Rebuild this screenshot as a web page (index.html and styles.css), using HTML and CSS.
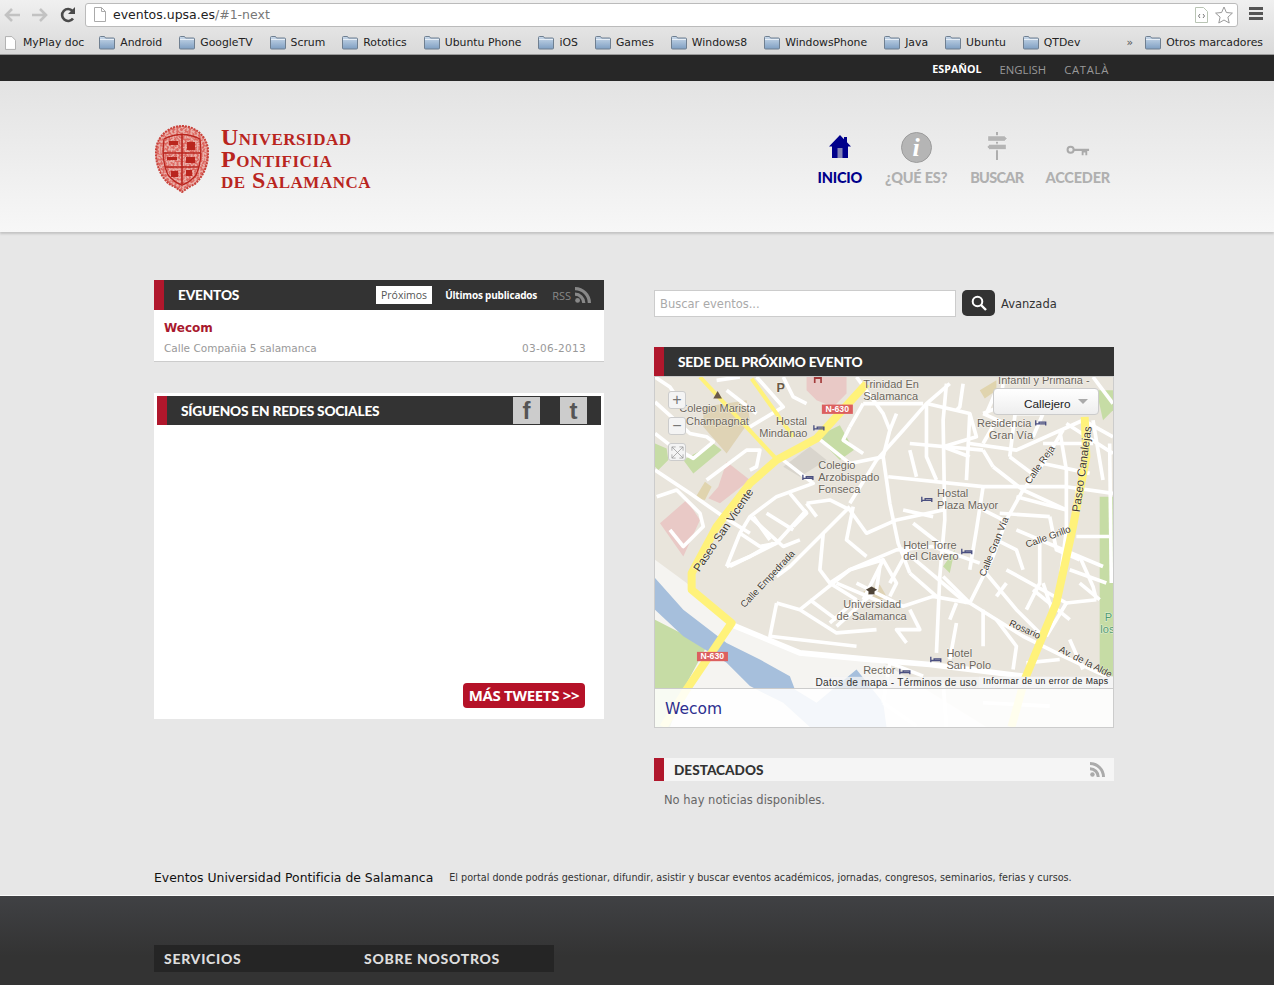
FILE: index.html
```html
<!DOCTYPE html>
<html lang="es">
<head>
<meta charset="UTF-8" />
<title>Eventos UPSA</title>
<link rel="stylesheet" href="styles.css">
</head>
<body>

<svg class="defs" width="0" height="0">
  <defs>
    <linearGradient id="folderfill" x1="0" y1="0" x2="0" y2="1">
      <stop offset="0" stop-color="#c9d9ea"/>
      <stop offset="1" stop-color="#7f9fc2"/>
    </linearGradient>
    <filter id="mottle" x="0" y="0" width="100%" height="100%">
      <feTurbulence type="fractalNoise" baseFrequency=".5" numOctaves="2" seed="4"/>
      <feColorMatrix values="0 0 0 0 .72  0 0 0 0 .14  0 0 0 0 .12  0 0 0 9 -4"/>
      <feComposite in2="SourceGraphic" operator="in"/>
    </filter>
    <symbol id="folder" viewBox="0 0 16 14">
      <path d="M.5 3V1.500q0-1 1-1h4l1 1.500h8q1 0 1 1v9q0 1-1 1h-13q-1 0-1-1z" fill="url(#folderfill)" stroke="#6f7f90"/>
      <path d="M1 3.500h14" stroke="#e6eef6"/>
    </symbol>
    <symbol id="rss" viewBox="0 0 16 16">
      <circle cx="2.600" cy="13.400" r="2.400"/>
      <path d="M0 5.600v3.200a7.200 7.200 0 0 1 7.200 7.200h3.200A10.400 10.400 0 0 0 0 5.600z"/>
      <path d="M0 0v3.200A12.800 12.800 0 0 1 12.800 16H16A16 16 0 0 0 0 0z"/>
    </symbol>
  </defs>
</svg>

<!-- browser chrome -->
<div class="browser">
  <div class="toolbar">
    <svg class="tool" viewBox="0 0 18 16"><path d="M9 2 3 8l6 6M3 8h14" fill="none" stroke="#c2c2c2" stroke-width="2.600"/></svg>
    <svg class="tool" viewBox="0 0 18 16"><path d="M9 2l6 6-6 6M15 8H1" fill="none" stroke="#c2c2c2" stroke-width="2.600"/></svg>
    <svg class="tool" viewBox="0 0 18 16"><path d="M14 11.500A6 6 0 1 1 13.600 4" fill="none" stroke="#4a4a4a" stroke-width="2.600"/><path d="M16 0v7H9z" fill="#4a4a4a"/></svg>
    <div class="address">
      <svg class="page-icon" viewBox="0 0 12 15"><path d="M.5.5h7l4 4v10H.5z" fill="#fff" stroke="#aaa"/><path d="M7.500.5v4h4" fill="none" stroke="#aaa"/></svg>
      <span class="url">eventos.upsa.es<span class="url-rest">/#1-next</span></span>
      <svg class="code-icon" viewBox="0 0 13 16"><path d="M.5.5h8l4 4v11H.5z" fill="#fff" stroke="#b9c4b4"/><path d="M5 7 3.500 9 5 11M8 7l1.500 2L8 11" fill="none" stroke="#777"/></svg>
      <svg class="star-icon" viewBox="0 0 18 18"><path d="m9 1 2.400 5.500 6 .6-4.500 4 1.300 5.900L9 14l-5.200 3 1.300-5.900-4.500-4 6-.6z" fill="#fff" stroke="#999"/></svg>
    </div>
    <div class="menu-icon"><i></i><i></i><i></i></div>
  </div>
  <div class="bookmarks">
    <span class="bm"><svg class="page-small" viewBox="0 0 12 15"><path d="M.5.5h7l4 4v10H.5z" fill="#fff" stroke="#aaa"/></svg>MyPlay doc</span>
    <span class="bm"><svg class="fld"><use href="#folder"/></svg>Android</span>
    <span class="bm"><svg class="fld"><use href="#folder"/></svg>GoogleTV</span>
    <span class="bm"><svg class="fld"><use href="#folder"/></svg>Scrum</span>
    <span class="bm"><svg class="fld"><use href="#folder"/></svg>Rototics</span>
    <span class="bm"><svg class="fld"><use href="#folder"/></svg>Ubuntu Phone</span>
    <span class="bm"><svg class="fld"><use href="#folder"/></svg>iOS</span>
    <span class="bm"><svg class="fld"><use href="#folder"/></svg>Games</span>
    <span class="bm"><svg class="fld"><use href="#folder"/></svg>Windows8</span>
    <span class="bm"><svg class="fld"><use href="#folder"/></svg>WindowsPhone</span>
    <span class="bm"><svg class="fld"><use href="#folder"/></svg>Java</span>
    <span class="bm"><svg class="fld"><use href="#folder"/></svg>Ubuntu</span>
    <span class="bm"><svg class="fld"><use href="#folder"/></svg>QTDev</span>
    <span class="bm-more">»</span>
    <span class="bm"><svg class="fld"><use href="#folder"/></svg>Otros marcadores</span>
  </div>
</div>

<!-- language bar -->
<div class="langbar">
  <a class="active">ESPAÑOL</a>
  <a>ENGLISH</a>
  <a>CATALÀ</a>
</div>

<header class="site-header">
  <div class="wrap header-inner">
    <div class="logo">
      <svg class="seal" viewBox="0 0 54 68">
        <path d="M27 1C38 1 51 9 53 24 54 36 50 50 40 59L34 62 27 67 20 62 14 59C4 50 0 36 1 24 3 9 16 1 27 1z" fill="#e9aea7"/>
        <path d="M27 1C38 1 51 9 53 24 54 36 50 50 40 59L34 62 27 67 20 62 14 59C4 50 0 36 1 24 3 9 16 1 27 1z" fill="#fff" filter="url(#mottle)"/>
        <path d="M27 1C38 1 51 9 53 24 54 36 50 50 40 59L34 62 27 67 20 62 14 59C4 50 0 36 1 24 3 9 16 1 27 1z" fill="none" stroke="#c8423b" stroke-width="2" stroke-dasharray="2 1"/>
        <path d="M9 14Q27 5 45 14 48 36 41 50 34 58 27 60 20 58 13 50 6 36 9 14z" fill="none" stroke="#b9251e" stroke-width="1.300"/>
        <path d="M27 9v50M9 28h36M10 42h34" stroke="#b9251e" stroke-width="1.600"/>
        <path d="M14 16h9v4h-9zM32 17h8v8h-8zM12 32h10v3H12zM31 32h9v6h-9zM16 46h7v6h-7zM31 45h6v6h-6z" fill="#b9251e"/>
      </svg>
      <div class="logo-text">
        <div>Universidad</div>
        <div>Pontificia</div>
        <div>de Salamanca</div>
      </div>
    </div>
    <nav class="mainnav">
      <a class="nav-item current">
        <svg class="nav-icon" viewBox="0 0 24 24"><path d="M12 1 1 12.500h3V24h16V12.500h3l-4-4.200V3h-3v2.200z" fill="#00008b"/><path d="M9.500 14h5v10h-5z" fill="#8383b5"/></svg>
        <span>INICIO</span>
      </a>
      <a class="nav-item">
        <span class="info-icon">i</span>
        <span>¿QUÉ ES?</span>
      </a>
      <a class="nav-item narrow">
        <svg class="nav-icon" viewBox="0 0 24 30"><path d="M11 0h2v30h-2z" fill="#aaa"/><path d="M2 4h18l3 3-3 3H2zM22 13H4l-3 3 3 3h18z" fill="#b5b5b5" stroke="#f2f2f2"/></svg>
        <span>BUSCAR</span>
      </a>
      <a class="nav-item">
        <svg class="nav-icon" viewBox="0 -6 26 16"><circle cx="5" cy="6" r="3.300" fill="none" stroke="#aaa" stroke-width="2.200"/><path d="M8 5h17v2.400h-2V12h-2V9h-2v3h-2V7.400H8z" fill="#aaa"/></svg>
        <span>ACCEDER</span>
      </a>
    </nav>
  </div>
</header>

<div class="wrap main">

  <div class="col-left">
    <section class="panel">
      <div class="panel-head">
        <h2>EVENTOS</h2>
        <div class="tabs">
          <a class="tab on">Próximos</a>
          <a class="tab">Últimos publicados</a>
          <a class="rss-link">RSS<svg class="rss-icon"><use href="#rss"/></svg></a>
        </div>
      </div>
      <div class="event">
        <a class="event-title">Wecom</a>
        <div class="event-meta">
          <span>Calle Compañia 5 salamanca</span>
          <span class="event-date">03-06-2013</span>
        </div>
      </div>
    </section>

    <section class="social">
      <div class="panel-head">
        <h2>SÍGUENOS EN REDES SOCIALES</h2>
        <div class="social-links">
          <a class="soc">f</a>
          <a class="soc">t</a>
        </div>
      </div>
      <div class="tweets">
        <a class="more-tweets">MÁS TWEETS &gt;&gt;</a>
      </div>
    </section>
  </div>

  <div class="col-right">
    <form class="search">
      <input type="text" placeholder="Buscar eventos..." />
      <button type="button" class="search-btn">
        <svg viewBox="0 0 16 16" width="16" height="16"><circle cx="6.500" cy="6.500" r="4.800" fill="none" stroke="#fff" stroke-width="2"/><path d="m10 10 5 5" stroke="#fff" stroke-width="2.400"/></svg>
      </button>
      <a class="advanced">Avanzada</a>
    </form>

    <section class="panel-map">
      <div class="panel-head">
        <h2>SEDE DEL PRÓXIMO EVENTO</h2>
      </div>
      <div class="map">
        <svg class="map-svg" viewBox="15 20 1375 1053" preserveAspectRatio="none">
          <rect x="15" y="20" width="1375" height="1053" fill="#e9e5dc"/>

          <!-- areas -->
          <path d="M15 570 110 640 245 770 500 860 700 880 1010 1073H15z" fill="#f5f4f1"/>
          <path d="M15 750 170 830 100 960 60 1073H15z" fill="#c6dca5"/>
          <path d="M15 625 100 720 230 820 330 870 420 920 435 960 500 1000 620 900 700 1000 710 1073H480L400 1000 300 950 230 880 100 800 15 720z" fill="#a6bfdc"/>
          <path d="M470 20h120v50l-40 40-50-20-30-30zM230 275 300 330 210 400 175 385 205 350zM30 460 110 390 150 450 100 560z" fill="#e9c9c6"/>
          <path d="M15 220 50 235 55 270 25 300 15 290zM100 270 190 220 215 240 130 310zM500 200 570 165 612 240 570 270z" fill="#c6dca5"/>
          <path d="M1350 380h40v540h-40z" fill="#c6dca5"/>
          <path d="M1340 60h50v60l-30 30z" fill="#c6dca5"/>
          <path d="M880 590 915 540 900 610z" fill="#c6dca5"/>
          <path d="M160 110 290 90 300 150 230 250 160 170z" fill="#dfd3b5"/>
          <path d="M400 290 480 230 530 270 450 320z" fill="#d9d5cd"/>
          <path d="M135 385 165 335 185 350 165 390zM990 60 1040 30 1040 60 1005 85z" fill="#e0d4ae"/>
          <path d="M640 665 690 645 710 680 680 700z" fill="#dfd3b5"/>

          <!-- streets -->
          <g class="streets">
            <path d="M15 95 120 190 170 200 190 215 130 265 60 225 15 190"/>
            <path d="M15 300 120 370 220 440 300 490"/>
            <path d="M170 330 290 240 330 240 320 290 300 300"/>
            <path d="M400 270 490 340 380 380 300 440 270 490 230 590"/>
            <path d="M620 20 700 130 720 180 700 260 720 400 745 520 780 610"/>
            <path d="M500 200 600 280 700 260"/>
            <path d="M600 400 680 270 760 180 830 100 900 40"/>
            <path d="M715 320 1000 350 1250 350 1390 370"/>
            <path d="M600 410 520 490 420 590 380 620"/>
            <path d="M520 490 510 600 540 640 620 690"/>
            <path d="M540 640 600 600 740 540 850 530"/>
            <path d="M450 720 600 600 700 570 640 690"/>
            <path d="M380 700 360 800 620 830"/>
            <path d="M380 700 450 720 560 790 680 780"/>
            <path d="M620 640 760 710 850 680 960 700"/>
            <path d="M890 40 880 150 885 450 870 620 860 850"/>
            <path d="M960 700 1030 560 1070 450 1120 360 1180 280 1240 180"/>
            <path d="M960 700 1120 800 1240 860 1390 930"/>
            <path d="M760 540 950 700"/>
            <path d="M1000 600 1100 720 1170 790"/>
            <path d="M1070 600 1250 700 1340 690"/>
            <path d="M1100 480 1360 590"/>
            <path d="M1230 180 1250 300 1250 480 1230 640"/>
            <path d="M1170 500 1170 640 1130 720"/>
            <path d="M1290 560 1330 650 1340 690"/>
            <path d="M1030 290 1120 360 1250 420"/>
            <path d="M960 220 1100 240 1300 150 1390 200"/>
            <path d="M780 220 1000 240"/>
            <path d="M830 100 960 130 980 200 880 230"/>
            <path d="M640 100 820 100"/>
            <path d="M470 400 540 390 600 420 650 490 740 450 880 420"/>
            <path d="M320 20 400 110 300 170"/>
            <path d="M200 30 270 20M230 60 320 130"/>
            <path d="M600 170 580 210 640 250"/>
            <path d="M20 380 80 360 150 430 160 470 100 530 60 480"/>
            <path d="M240 590 380 520 470 420"/>
            <path d="M300 440 400 530 450 510"/>
            <path d="M610 410 590 510 650 560"/>
            <path d="M690 590 680 660 560 770"/>
            <path d="M720 640 780 530M790 460 880 530"/>
            <path d="M1000 350 980 480 960 600"/>
            <path d="M1100 100 1080 260M1180 280 1320 310"/>
            <path d="M780 720 810 780 740 780 770 820"/>
            <path d="M900 750 920 700"/>
            <path d="M1150 660 1260 750"/>
            <path d="M1330 20 1390 100"/>
            <path d="M1040 150 1000 220"/>
            <path d="M940 40 930 110 920 120"/>
            <path d="M1380 220 1385 640"/>
            <path d="M700 1000 720 880M700 1000 800 1070M720 880 820 920"/>
            <path d="M880 940 890 1073M1000 1000 1200 1010"/>
            <path d="M230 590 300 560 370 520M270 490 330 530 380 520M310 440 360 510M350 430 430 480"/>
            <path d="M420 370 470 430 430 470M470 400 500 440"/>
            <path d="M740 130 720 180M830 100 830 260 860 330M880 230 960 260M960 130 950 330M780 240 800 320"/>
            <path d="M1040 60 1010 130M1060 40 1050 110 1000 130M1000 240 1030 290M1080 260 1160 320"/>
            <path d="M1100 380 1250 420M1050 430 1200 440M1040 510 1100 540 1120 600M1200 440 1220 540 1290 570"/>
            <path d="M850 530 990 580M880 620 960 700M780 610 860 680M700 570 740 640 720 680"/>
            <path d="M560 640 700 700M620 690 540 760M480 690 560 750M1040 680 1070 640"/>
            <path d="M920 760 900 870M1000 720 1000 830M1040 750 1100 830 1090 900M1180 640 1210 730M1250 700 1190 800"/>
            <path d="M1260 810 1300 900M1290 640 1350 690M1260 600 1370 640M1130 880 1230 870M1280 500 1380 500"/>
            <path d="M1250 160 1390 250M1330 150 1360 330M1180 220 1330 220M1280 350 1290 400"/>
            <path d="M15 20 60 50 100 110M400 20 430 80 470 100M600 170 640 100"/>
            <path d="M1100 130 1180 130 1150 200M1000 130 1090 170M760 420 850 440M1000 420 1060 450"/>
          </g>
          <path class="road-main" d="M245 765 450 850 640 868 840 885 1120 920"/>

          <!-- yellow roads -->
          <g class="yellow">
            <path class="thin" d="M150 20 375 262"/>
            <path class="thin" d="M305 25 430 200"/>
            <path d="M650 40 500 205 380 270 300 340 200 470 125 610 125 660 245 760 110 960 40 1073"/>
            <path d="M1305 140 1310 260 1270 470 1220 700 1125 930 1085 1073"/>
          </g>

          <!-- highway shields -->
          <rect x="516" y="103" width="93" height="28" fill="#dc5f5f"/>
          <text class="shield" x="562" y="125">N-630</text>
          <rect x="141" y="847" width="93" height="28" fill="#dc5f5f"/>
          <text class="shield" x="187" y="869">N-630</text>

          <!-- labels -->
          <g class="labels">
            <text x="640" y="52">Trinidad En</text>
            <text x="640" y="88">Salamanca</text>
            <text x="1045" y="42">Infantil y Primaria -</text>
            <text x="88" y="124">Colegio Marista</text>
            <text x="108" y="164">Champagnat</text>
            <text x="378" y="164">Hostal</text>
            <text x="328" y="200">Mindanao</text>
            <text x="982" y="170">Residencia</text>
            <text x="1018" y="206">Gran Vía</text>
            <text x="505" y="296">Colegio</text>
            <text x="505" y="332">Arzobispado</text>
            <text x="505" y="368">Fonseca</text>
            <text x="862" y="380">Hostal</text>
            <text x="862" y="416">Plaza Mayor</text>
            <text x="760" y="536">Hotel Torre</text>
            <text x="760" y="572">del Clavero</text>
            <text x="580" y="716">Universidad</text>
            <text x="560" y="752">de Salamanca</text>
            <text x="890" y="863">Hotel</text>
            <text x="890" y="899">San Polo</text>
            <text x="640" y="914">Rector</text>
            <text class="green-label" x="1365" y="755">P</text>
            <text class="green-label" x="1352" y="790">los</text>
            <text class="bold-p" x="380" y="66">P</text>
            <text class="road paseo" transform="translate(148 608) rotate(-56)">Paseo San Vicente</text>
            <text class="road paseo" transform="translate(1290 428) rotate(-82)">Paseo Canalejas</text>
            <text class="road" transform="translate(284 716) rotate(-47)">Calle Empedrada</text>
            <text class="road" transform="translate(1006 622) rotate(-68)">Calle Gran Vía</text>
            <text class="road" transform="translate(1140 344) rotate(-55)">Calle Reja</text>
            <text class="road" transform="translate(1132 534) rotate(-20)">Calle Grillo</text>
            <text class="road" transform="translate(1076 768) rotate(24)">Rosario</text>
            <text class="road" transform="translate(1226 846) rotate(27)">Av. de la Alde</text>
          </g>

          <!-- hotel pins -->
          <g class="bed">
            <path d="M492 165v16M492 176h30v5M522 181v-10h-20v5"/>
            <path d="M1158 150v16M1158 161h30v5M1188 166v-10h-20v5"/>
            <path d="M459 314v16M459 325h30v5M489 330v-10h-20v5"/>
            <path d="M816 380v16M816 391h30v5M846 396v-10h-20v5"/>
            <path d="M936 537v16M936 548h30v5M966 553v-10h-20v5"/>
            <path d="M843 862v16M843 873h30v5M873 878v-10h-20v5"/>
            <path d="M750 898v16M750 909h30v5M780 914v-10h-20v5"/>
          </g>
          <path d="M665 650 682 660 665 670 648 660z" fill="#4e4336"/>
          <path d="M656 664v10h18v-10z" fill="#4e4336"/>
          <path d="M190 85 203 62 216 85z" fill="#6a5a48"/>
          <path d="M492 20h24v18h-5V26h-14v12h-5z" fill="#a33b3b"/>

          <!-- attribution -->
          <rect class="attr-bg" x="490" y="922" width="900" height="34"/>
          <text class="attr" x="497" y="950">Datos de mapa - Términos de uso</text>
          <rect x="988" y="922" width="402" height="34" fill="#f5f5f5"/>
          <text class="attr-small" x="1000" y="944">Informar de un error de Maps</text>
        </svg>

        <div class="zoom-ctl">
          <span class="zoom-btn">+</span>
          <span class="zoom-btn">−</span>
          <span class="zoom-btn full">
            <svg viewBox="0 0 14 14" width="13" height="13"><path d="M1 5V1h4M9 1h4v4M13 9v4H9M5 13H1V9M1 1l12 12M13 1 1 13" fill="none" stroke="#999" stroke-width=".8"/></svg>
          </span>
        </div>
        <div class="map-type">Callejero<i></i></div>
        <div class="map-caption">Wecom</div>
      </div>
    </section>

    <section class="featured">
      <div class="featured-head">
        <h3>DESTACADOS</h3>
        <svg class="feat-rss"><use href="#rss"/></svg>
      </div>
      <p>No hay noticias disponibles.</p>
    </section>
  </div>
</div>

<div class="wrap tagline">
  <span class="tag-title">Eventos Universidad Pontificia de Salamanca</span>
  <span class="tag-text">El portal donde podrás gestionar, difundir, asistir y buscar eventos académicos, jornadas, congresos, seminarios, ferias y cursos.</span>
</div>

<footer class="site-footer">
  <div class="wrap">
    <div class="footer-bar">
      <span>SERVICIOS</span>
      <span>SOBRE NOSOTROS</span>
    </div>
  </div>
</footer>

</body>
</html>
```

FILE: styles.css
```css
html, body {
  margin: 0;
  padding: 0;
  height: 985px;
  overflow: hidden;
}
body {
  background: #e7e7e7;
  color: #333;
  font-family: "DejaVu Sans", sans-serif;
  font-size: 12px;
}
h2, h3, p {
  margin: 0;
}
.defs {
  position: absolute;
}
.wrap {
  width: 960px;
  margin-left: 154px;
}

/* browser chrome */
.browser {
  height: 55px;
  box-sizing: border-box;
  background: linear-gradient(#f0f0f0, #d9d9d9);
  border-bottom: 1px solid #999;
}
.toolbar {
  height: 29px;
  display: flex;
  align-items: center;
  padding-left: 3px;
}
.tool {
  width: 18px;
  height: 16px;
  margin-right: 10px;
  flex-shrink: 0;
}
.address {
  width: 1153px;
  height: 24px;
  margin-left: -2px;
  box-sizing: border-box;
  background: #fff;
  border: 1px solid #bbb;
  border-radius: 3px;
  display: flex;
  align-items: center;
  padding: 0 4px 0 8px;
}
.page-icon {
  width: 12px;
  height: 15px;
  margin-right: 7px;
}
.url {
  font-size: 12.500px;
  color: #222;
  flex: 1;
}
.url-rest {
  color: #777;
}
.code-icon {
  width: 13px;
  height: 16px;
  margin-right: 7px;
}
.star-icon {
  width: 18px;
  height: 18px;
}
.menu-icon {
  margin-left: 11px;
  width: 14px;
}
.menu-icon i {
  display: block;
  height: 3px;
  margin-bottom: 2px;
  background: #555;
}
.bookmarks {
  height: 25px;
  box-sizing: border-box;
  display: flex;
  align-items: center;
  padding: 2px 0 0 5px;
  font-size: 10.850px;
  color: #222;
  white-space: nowrap;
}
.bm {
  display: flex;
  align-items: center;
  margin-right: 17px;
}
.bm:first-child {
  margin-right: 15px;
}
.fld {
  width: 16px;
  height: 14px;
  margin-right: 5px;
}
.page-small {
  width: 11px;
  height: 14px;
  margin-right: 7px;
}
.bm-more {
  margin-left: auto;
  margin-right: 12px;
  color: #555;
}
.bm:last-child {
  margin-right: 11px;
}

/* language bar */
.langbar {
  height: 26px;
  box-sizing: border-box;
  padding: 2px 165px 0 0;
  background: #272727;
  display: flex;
  justify-content: flex-end;
  align-items: center;
  gap: 18px;
  font-size: 11.300px;
  color: #999;
  font-family: "Open Sans", sans-serif;
}
.langbar .active {
  color: #fff;
  font-weight: 700;
  font-size: 10.700px;
}
.langbar a:last-child {
  letter-spacing: .7px;
}

/* site header */
.site-header {
  height: 151px;
  background: linear-gradient(#e3e3e3, #f7f7f7);
  box-shadow: 0 2px 2px #c4c4c4;
}
.header-inner {
  display: flex;
  justify-content: space-between;
  height: 100%;
}
.logo {
  display: flex;
  margin-top: 44px;
  margin-left: 1px;
}
.seal {
  width: 54px;
  height: 68px;
}
.logo-text {
  margin-left: 12px;
  margin-top: 2px;
  font-family: "Liberation Serif", serif;
  font-variant: small-caps;
  font-weight: 700;
  font-size: 24px;
  line-height: 21.500px;
  letter-spacing: .5px;
  color: #b9251e;
}
.mainnav {
  display: flex;
  margin-top: 50px;
}
.nav-item {
  display: flex;
  flex-direction: column;
  align-items: center;
  justify-content: flex-end;
  height: 55px;
  margin-left: 23px;
  font-family: "Lato", sans-serif;
  font-weight: 900;
  font-size: 14.500px;
  color: #b0b0b0;
  white-space: nowrap;
  letter-spacing: -.2px;
}
.nav-item:last-child {
  margin-left: 22px;
  margin-right: 4px;
}
.nav-item.narrow {
  letter-spacing: -.7px;
}
.nav-item.current {
  color: #00008b;
}
.nav-icon {
  width: 24px;
  height: 28px;
  margin-bottom: 9px;
}
.info-icon {
  width: 29px;
  height: 29px;
  margin-bottom: 6px;
  border-radius: 50%;
  background: #b5b5b5;
  border: 1px solid #9c9c9c;
  color: #fff;
  font-family: "Liberation Serif", serif;
  font-style: italic;
  font-weight: 700;
  font-size: 26px;
  line-height: 29px;
  text-align: center;
}

/* main columns */
.main {
  display: flex;
  gap: 50px;
  height: 630px;
  padding-top: 48px;
  box-sizing: border-box;
}
.col-left {
  width: 450px;
}
.col-right {
  width: 460px;
  padding-top: 10px;
}
.panel-head {
  height: 30px;
  background: #333;
  border-left: 10px solid #b0172c;
  padding-left: 14px;
  display: flex;
  align-items: center;
  justify-content: space-between;
}
.panel-head h2 {
  font-family: "Lato", sans-serif;
  font-weight: 900;
  font-size: 13.700px;
  letter-spacing: -.2px;
  color: #fff;
  padding-bottom: 1px;
}
.tabs {
  display: flex;
  align-items: center;
  padding-right: 13px;
  font-size: 10px;
}
.tab {
  color: #fff;
  font-weight: 700;
  font-family: "Open Sans", sans-serif;
  font-size: 10px;
  letter-spacing: -.2px;
  margin-right: 15px;
}
.tab.on {
  background: #fff;
  color: #555;
  font-weight: 400;
  font-size: 10.500px;
  letter-spacing: 0;
  padding: 2px 5px;
  margin-right: 13px;
}
.rss-link {
  display: flex;
  align-items: center;
  color: #888;
  font-size: 11px;
  font-family: "Open Sans", sans-serif;
}
.rss-icon {
  width: 16px;
  height: 16px;
  margin-left: 4px;
  fill: #888;
}
.event {
  background: #fff;
  height: 52px;
  box-sizing: border-box;
  border-bottom: 1px solid #ccc;
  padding: 10px 18px 0 10px;
}
.event-title {
  display: block;
  color: #a8192e;
  font-weight: 700;
  font-size: 12px;
  line-height: 17px;
}
.event-meta {
  display: flex;
  justify-content: space-between;
  margin-top: 5px;
  color: #999;
  font-size: 10.500px;
}
.event-date {
  letter-spacing: .3px;
}

/* social box */
.social {
  margin-top: 31px;
  height: 326px;
  box-sizing: border-box;
  background: #fff;
  padding: 3px;
  display: flex;
  flex-direction: column;
}
.social .panel-head {
  height: 29px;
}
.social-links {
  display: flex;
  gap: 20px;
  padding-right: 14px;
}
.soc {
  width: 27px;
  height: 27px;
  background: #ccc;
  color: #555;
  font-family: "Liberation Sans", sans-serif;
  font-weight: 700;
  font-size: 24px;
  line-height: 27px;
  text-align: center;
}
.tweets {
  flex: 1;
  display: flex;
  justify-content: flex-end;
  align-items: flex-end;
  padding: 0 16px 8px 0;
}
.more-tweets {
  width: 122px;
  height: 25px;
  box-sizing: border-box;
  background: #b51228;
  border-radius: 4px;
  color: #fff;
  font-family: "Open Sans", sans-serif;
  font-weight: 700;
  font-size: 15px;
  line-height: 25px;
  text-align: center;
  letter-spacing: -.3px;
  white-space: nowrap;
}

/* search */
.search {
  display: flex;
  align-items: flex-start;
  height: 27px;
}
.search input {
  width: 302px;
  height: 27px;
  box-sizing: border-box;
  border: 1px solid #ccc;
  padding: 0 5px;
  font-family: "DejaVu Sans", sans-serif;
  font-size: 11.500px;
  background: #fff;
}
.search input::placeholder {
  color: #aaa;
}
.search-btn {
  width: 33px;
  height: 26px;
  margin-left: 6px;
  background: #333;
  border: 0;
  border-radius: 5px;
  padding: 0;
  display: flex;
  align-items: center;
  justify-content: center;
}
.advanced {
  margin-left: 6px;
  margin-top: 7px;
  font-size: 11.500px;
  color: #333;
}

/* map */
.panel-map {
  margin-top: 30px;
}
.panel-map .panel-head {
  height: 29px;
}
.map {
  position: relative;
  height: 352px;
  box-sizing: border-box;
  border: 1px solid #ccc;
  overflow: hidden;
}
.map-svg {
  display: block;
  width: 458px;
  height: 350px;
}
.streets path {
  fill: none;
  stroke: #fff;
  stroke-width: 11;
  stroke-linejoin: round;
}
.road-main {
  fill: none;
  stroke: #fff;
  stroke-width: 17;
}
.yellow path {
  fill: none;
  stroke: #fff27a;
  stroke-width: 24;
  stroke-linejoin: round;
}
.yellow .thin {
  stroke-width: 12;
}
.labels text {
  font-family: "Liberation Sans", sans-serif;
  font-size: 33px;
  fill: #6b655a;
  paint-order: stroke;
  stroke: #fff;
  stroke-width: 3;
  stroke-opacity: .6;
}
.labels .road {
  fill: #3f3a30;
  font-size: 29px;
}
.labels .paseo {
  font-size: 34.500px;
}
.labels .green-label {
  fill: #4f9a70;
}
.labels .bold-p {
  fill: #6a5a48;
  font-weight: 700;
  font-size: 38px;
}
.shield {
  font-family: "Liberation Sans", sans-serif;
  font-weight: 700;
  font-size: 26px;
  fill: #fff;
  text-anchor: middle;
}
.bed path {
  fill: none;
  stroke: #4a4f80;
  stroke-width: 4;
}
.attr-bg {
  fill: #f5f5f5;
  fill-opacity: .75;
}
.attr {
  font-family: "Liberation Sans", sans-serif;
  font-size: 30.500px;
  letter-spacing: .8px;
  fill: #333;
}
.attr-small {
  font-family: "Liberation Sans", sans-serif;
  font-size: 26px;
  letter-spacing: 1.400px;
  fill: #222;
}
.zoom-ctl {
  position: absolute;
  left: 13px;
  top: 14px;
  display: flex;
  flex-direction: column;
  gap: 8px;
}
.zoom-btn {
  width: 16px;
  height: 16px;
  background: #f4f4f4;
  border: 1px solid #ccc;
  border-radius: 3px;
  color: #777;
  font-family: "Liberation Sans", sans-serif;
  font-size: 16px;
  line-height: 15px;
  text-align: center;
}
.zoom-btn.full {
  display: flex;
  align-items: center;
  justify-content: center;
}
.map-type {
  position: absolute;
  left: 338px;
  top: 11px;
  width: 106px;
  height: 27px;
  box-sizing: border-box;
  background: linear-gradient(#fff, #eee);
  border: 1px solid #ccc;
  border-radius: 4px;
  padding-left: 30px;
  font-family: "Liberation Sans", sans-serif;
  font-size: 11.800px;
  line-height: 30px;
  color: #222;
}
.map-type i {
  position: absolute;
  left: 84px;
  top: 10px;
  border: 5px solid transparent;
  border-top: 5px solid #aaa;
}
.map-caption {
  position: absolute;
  left: 0;
  right: 0;
  top: 311px;
  height: 39px;
  box-sizing: border-box;
  background: rgba(255, 255, 255, .87);
  border-top: 1px solid #ccc;
  padding-left: 10px;
  font-size: 15.500px;
  line-height: 41px;
  color: #2d2f8f;
}

/* featured */
.featured {
  margin-top: 30px;
}
.featured-head {
  height: 23px;
  background: #f5f5f5;
  border-left: 10px solid #b0172c;
  padding: 0 9px 0 10px;
  display: flex;
  align-items: center;
  justify-content: space-between;
}
.featured-head h3 {
  font-family: "Lato", sans-serif;
  font-weight: 900;
  font-size: 13.600px;
  color: #333;
}
.feat-rss {
  width: 15px;
  height: 15px;
  fill: #aaa;
}
.featured p {
  margin: 12px 0 0 10px;
  font-size: 11.500px;
  color: #666;
}

/* bottom */
.tagline {
  height: 33px;
  box-sizing: border-box;
  padding-bottom: 2px;
  display: flex;
  align-items: center;
  gap: 16px;
  white-space: nowrap;
}
.tag-title {
  font-size: 12.400px;
  color: #111;
}
.tag-text {
  font-size: 9.650px;
  color: #333;
}
.site-footer {
  height: 90px;
  box-sizing: border-box;
  border-top: 1px solid #fafafa;
  padding-top: 49px;
  background: linear-gradient(#404144, #333 60px);
}
.footer-bar {
  width: 400px;
  height: 27px;
  background: #252525;
  display: grid;
  grid-template-columns: 200px 200px;
  align-items: center;
  padding-left: 10px;
  box-sizing: border-box;
  font-family: "Lato", sans-serif;
  font-weight: 900;
  font-size: 14px;
  letter-spacing: .7px;
  color: #ddd;
}
```
